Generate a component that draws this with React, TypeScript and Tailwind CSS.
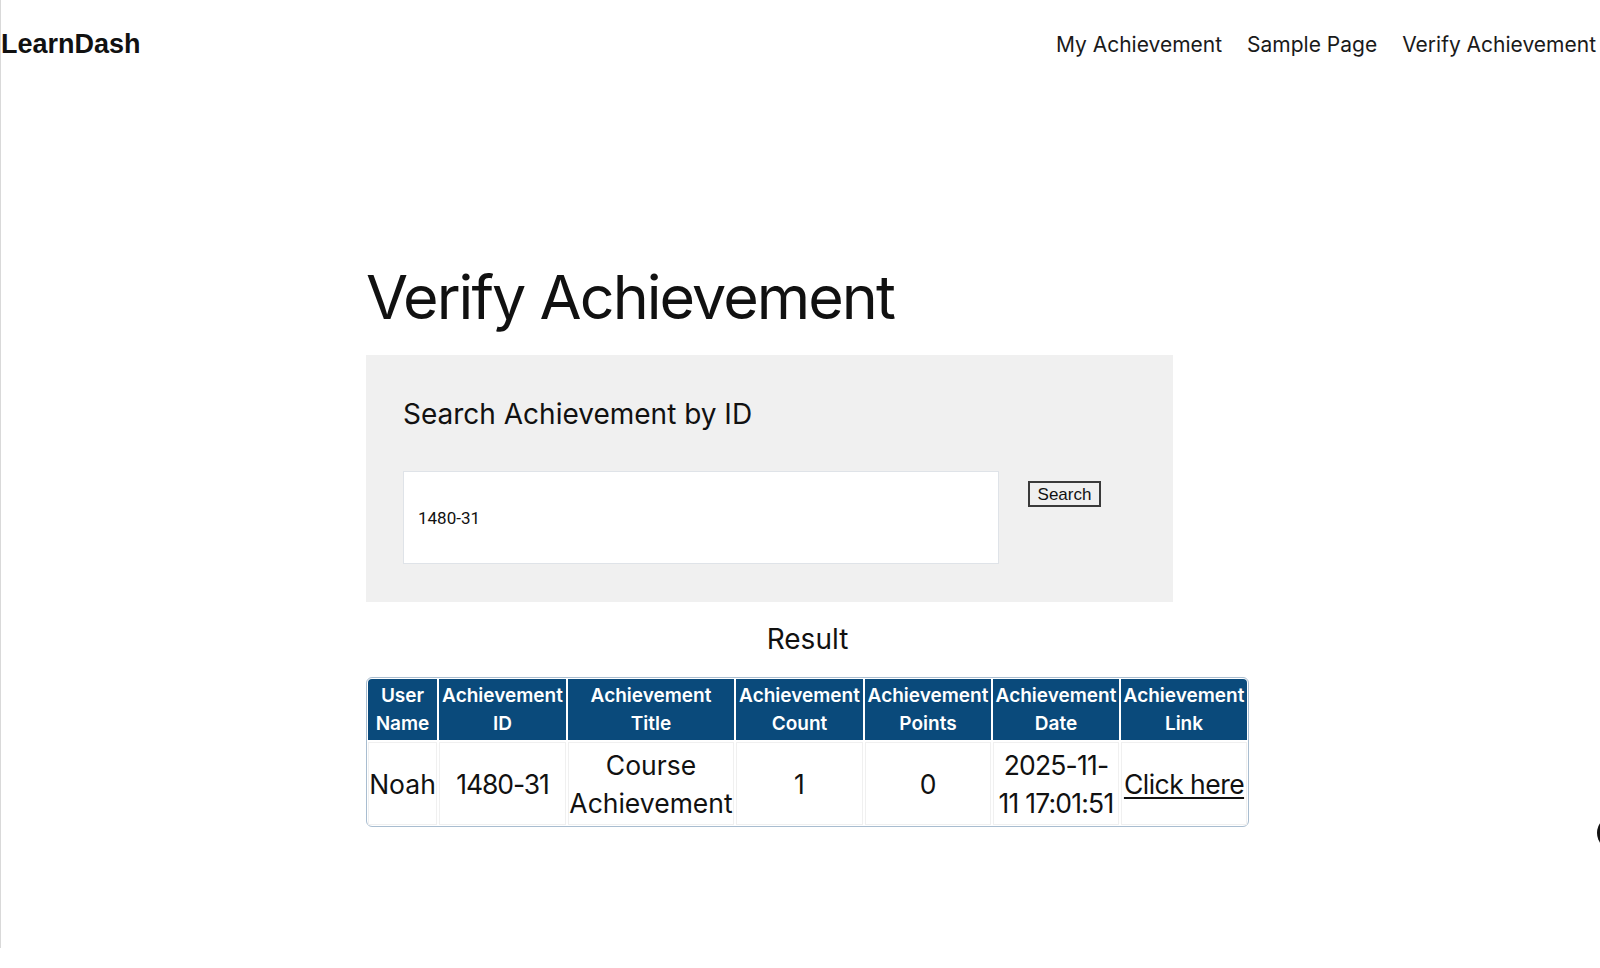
import React from "react";

const headers: string[][] = [
  ["User", "Name"],
  ["Achievement", "ID"],
  ["Achievement", "Title"],
  ["Achievement", "Count"],
  ["Achievement", "Points"],
  ["Achievement", "Date"],
  ["Achievement", "Link"],
];

export default function App() {
  return (
    <div className="relative w-full h-[968px] overflow-hidden bg-white font-['Inter',sans-serif] text-[#111]">
      <div className="h-[948px] border-l border-[#d9d9d9]">
        <header className="flex items-start justify-between pt-[29px] pr-[4px]">
          <div className="font-['Liberation_Sans',Arial,sans-serif] text-[27px] font-bold leading-[30px] text-[#111]">
            LearnDash
          </div>
          <nav className="mt-[2px] flex gap-[25px] text-[21px] leading-[28px] text-[#1a1a1a]">
            <a href="#">My Achievement</a>
            <a href="#">Sample Page</a>
            <a href="#">Verify Achievement</a>
          </nav>
        </header>

        <main className="ml-[365px] mt-[201px] w-[883px]">
          <h1 className="mb-[21px] text-[61px] leading-[74px] tracking-[-0.032em] text-[#111]">
            Verify Achievement
          </h1>

          <section className="h-[247px] w-[807px] bg-[#f0f0f0] pl-[37px] pt-[42px]">
            <h2 className="text-[28px] leading-[34px] text-[#111]">Search Achievement by ID</h2>
            <div className="mt-[40px] flex items-start">
              <input
                readOnly
                defaultValue="1480-31"
                className="h-[93px] w-[596px] border border-[#dfe3e8] bg-white pl-[14px] font-['Roboto',sans-serif] text-[17px] text-[#111] outline-none"
              />
              <button className="ml-[29px] mt-[10px] flex h-[26px] w-[73px] items-center justify-center border-2 border-[#3a3a3a] bg-[#efefef] font-['Liberation_Sans',Arial,sans-serif] text-[17px] leading-none text-[#111]">
                Search
              </button>
            </div>
          </section>

          <div className="mt-[20px] text-center text-[28px] leading-[34px] text-[#111]">Result</div>

          <div className="mt-[21px] w-[883px] rounded-[6px] border border-[#a9bdd0] p-px">
            <div className="grid grid-cols-[69px_127px_166px_127px_126px_126px_126px] grid-rows-[61px_83px] gap-[2px]">
              {headers.map((h, i) => (
                <div
                  key={i}
                  className={`flex flex-col items-center justify-center bg-[#0a4a7b] text-center text-[19px] font-semibold leading-[28px] text-white ${
                    i === 0 ? "rounded-tl-[4px]" : ""
                  } ${i === 6 ? "rounded-tr-[4px]" : ""}`}
                >
                  <span className="whitespace-nowrap">{h[0]}</span>
                  <span className="whitespace-nowrap">{h[1]}</span>
                </div>
              ))}

              <div className="flex flex-col items-center justify-center border border-[#f0f0f0] text-[26.5px] leading-[38px]">
                <span className="whitespace-nowrap">Noah</span>
              </div>
              <div className="flex flex-col items-center justify-center border border-[#f0f0f0] text-[26.5px] leading-[38px] tracking-[-0.04em] proportional-nums">
                <span className="whitespace-nowrap">1480-31</span>
              </div>
              <div className="flex flex-col items-center justify-center border border-[#f0f0f0] text-[26.5px] leading-[38px]">
                <span className="whitespace-nowrap">Course</span>
                <span className="whitespace-nowrap">Achievement</span>
              </div>
              <div className="flex flex-col items-center justify-center border border-[#f0f0f0] text-[26.5px] leading-[38px] proportional-nums">
                <span>1</span>
              </div>
              <div className="flex flex-col items-center justify-center border border-[#f0f0f0] text-[26.5px] leading-[38px] proportional-nums">
                <span>0</span>
              </div>
              <div className="flex flex-col items-center justify-center border border-[#f0f0f0] text-[26.5px] leading-[38px] tracking-[-0.03em] proportional-nums">
                <span className="whitespace-nowrap">2025-11-</span>
                <span className="whitespace-nowrap">11 17:01:51</span>
              </div>
              <div className="flex flex-col items-center justify-center border border-[#f0f0f0] text-[26.5px] leading-[38px] tracking-[-0.02em]">
                <a
                  href="#"
                  className="whitespace-nowrap text-[#111] underline decoration-[1.5px] underline-offset-[3px]"
                >
                  Click here
                </a>
              </div>
            </div>
          </div>
        </main>
      </div>
      <div className="absolute left-[1597px] top-[816px] h-[34px] w-[34px] rounded-full bg-[#111]" />
    </div>
  );
}
